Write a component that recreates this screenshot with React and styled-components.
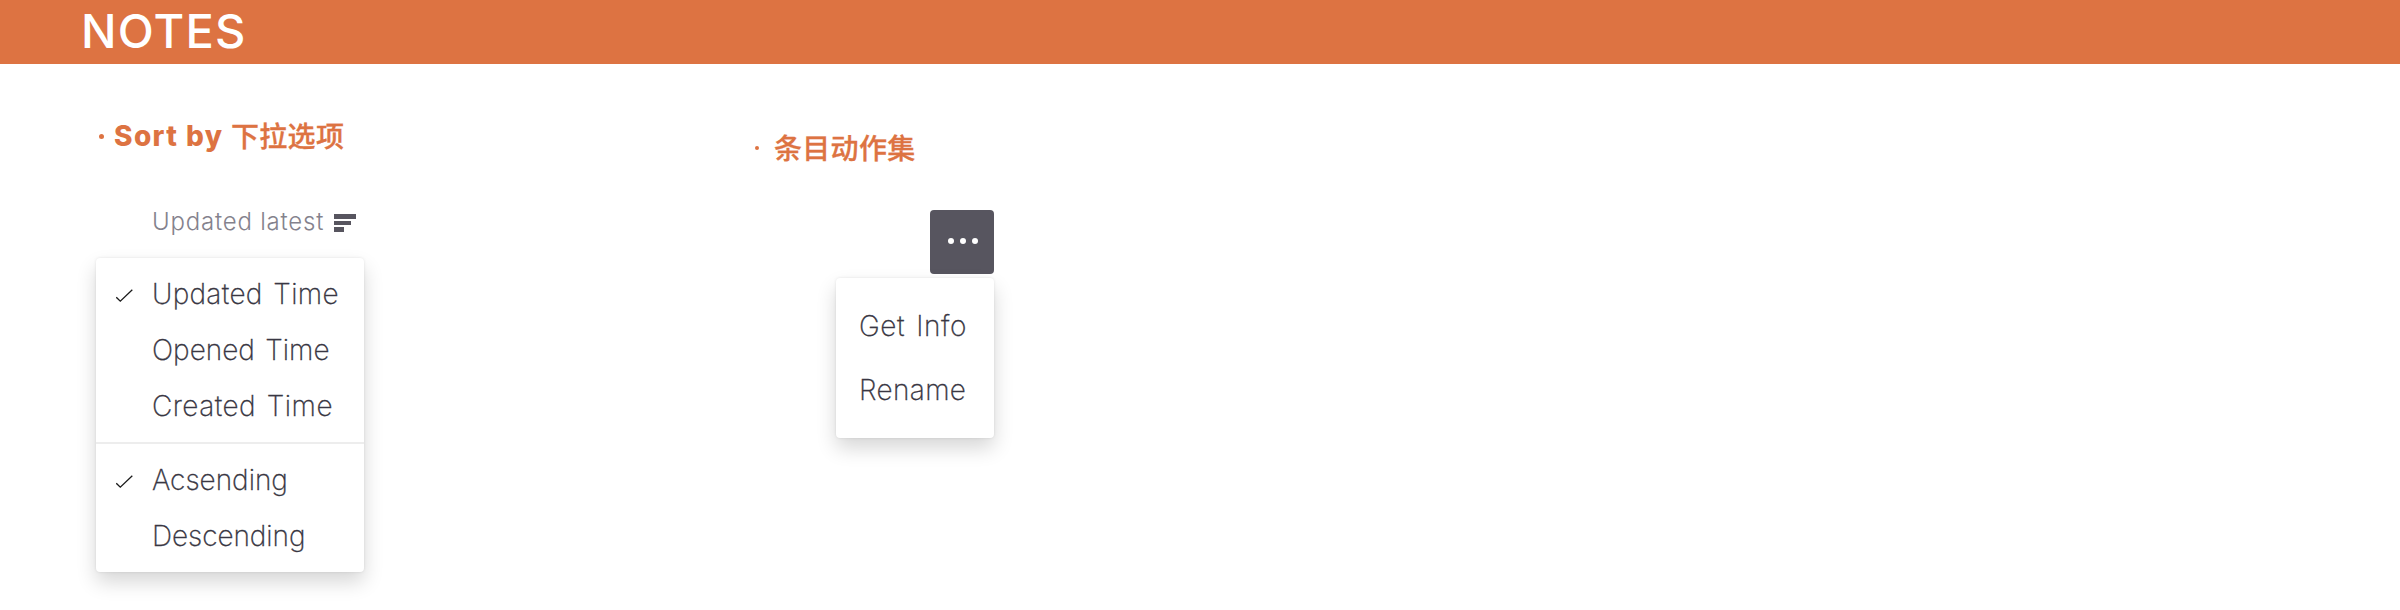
import React from "react";
import styled, { createGlobalStyle } from "styled-components";

const GlobalStyle = createGlobalStyle`
  *, *::before, *::after { box-sizing: border-box; }
  body {
    margin: 0;
    background: #fff;
    color: #393743;
    font-family: Inter, "Noto Sans CJK SC", sans-serif;
  }
`;

const Header = styled.header`
  height: 64px;
  padding-left: 81px;
  display: flex;
  align-items: center;
  background: #dd7342;
`;

const Title = styled.h1`
  margin: 0;
  padding-bottom: 2px;
  color: #fff;
  font-size: 47px;
  line-height: 62px;
  font-weight: 500;
  letter-spacing: 1.2px;
`;

const Content = styled.main`
  display: flex;
  align-items: flex-start;
  min-height: 546px;
`;

const SortSection = styled.section`
  width: 268px;
  margin-left: 96px;
  padding-top: 52px;
`;

const ActionSection = styled.section`
  width: 242px;
  margin-left: 388px;
  padding-top: 64px;
  display: flex;
  flex-direction: column;
`;

const Heading = styled.h2`
  margin: 0;
  height: 40px;
  display: flex;
  align-items: center;
  color: #dd7342;
  font-size: 28px;
  line-height: 40px;
  font-weight: 800;
  white-space: pre;
`;

const Bullet = styled.span`
  width: ${(p) => p.$size}px;
  height: ${(p) => p.$size}px;
  margin-left: ${(p) => p.$offset}px;
  margin-right: ${(p) => p.$gap}px;
  border-radius: 50%;
  background: #dd7342;
`;

const Latin = styled.span`
  width: 117px;
  letter-spacing: 1.4px;
`;

const Chinese = styled.span`
  padding-bottom: 2px;
  font-family: "Noto Sans CJK SC", sans-serif;
  font-weight: 500;
  letter-spacing: 0.3px;
  -webkit-text-stroke: 0.3px #dd7342;
`;

const SortTrigger = styled.div`
  height: 40px;
  margin-top: 46px;
  padding: 2px 0 0 56px;
  display: flex;
  align-items: center;
  color: #84828d;
  font-size: 24px;
  font-weight: 300;
  letter-spacing: 0.8px;
  white-space: nowrap;
`;

const SortLabel = styled.span`
  width: 182px;
  padding-bottom: 3px;
`;

const Menu = styled.div`
  width: ${(p) => p.$width}px;
  padding: ${(p) => p.$padding}px 0;
  border-radius: 4px;
  background: #fff;
  box-shadow: 0 10px 20px rgba(0, 0, 0, 0.16), 0 0 3px rgba(0, 0, 0, 0.1);
`;

const SortMenu = styled(Menu)`
  margin-top: 16px;
`;

const ActionMenu = styled(Menu)`
  margin-top: 4px;
  align-self: flex-end;
`;

const Item = styled.div`
  height: ${(p) => p.$height}px;
  padding-left: ${(p) => p.$inset}px;
  display: flex;
  align-items: center;
  font-size: 28px;
  font-weight: 200;
  letter-spacing: ${(p) => p.$tracking ?? 0.2}px;
  word-spacing: 2.5px;
  white-space: nowrap;
  -webkit-text-stroke: 0.3px #393743;
`;

const CheckSlot = styled.span`
  width: 36px;
  padding-top: 4px;
  display: flex;
`;

const Divider = styled.div`
  height: 2px;
  margin: 8px 0;
  background: #ededed;
`;

const MoreButton = styled.button`
  width: 64px;
  height: 64px;
  margin-top: 42px;
  padding: 0 0 2px 2px;
  align-self: flex-end;
  display: flex;
  align-items: center;
  justify-content: center;
  gap: 6px;
  border: 0;
  border-radius: 4px;
  background: #57555f;
`;

const Dot = styled.span`
  width: 6px;
  height: 6px;
  border-radius: 50%;
  background: #fff;
`;

const SortIcon = () => (
  <svg width="22" height="18" viewBox="0 0 22 18" fill="#57555f">
    <path d="M0 0h22v5H0zM0 7h17v4H0zM0 13h10v5H0z" />
  </svg>
);

const CheckIcon = () => (
  <svg width="18" height="14" viewBox="0 0 18 14" fill="none" stroke="#1a1a1a" strokeWidth="1.3">
    <path d="M0.3 8.3L4.3 12.2L16.3 0.8" />
  </svg>
);

const SortItem = ({ checked, children, tracking }) => (
  <Item $height={56} $inset={20} $tracking={tracking}>
    <CheckSlot>{checked && <CheckIcon />}</CheckSlot>
    {children}
  </Item>
);

export default function App() {
  return (
    <>
      <GlobalStyle />
      <Header>
        <Title>NOTES</Title>
      </Header>
      <Content>
        <SortSection>
          <Heading>
            <Bullet $size={5} $offset={3} $gap={10} />
            <Latin>Sort by</Latin>
            <Chinese>下拉选项</Chinese>
          </Heading>
          <SortTrigger>
            <SortLabel>Updated latest</SortLabel>
            <SortIcon />
          </SortTrigger>
          <SortMenu $width={268} $padding={8}>
            <SortItem checked tracking={0.3}>Updated Time</SortItem>
            <SortItem tracking={0}>Opened Time</SortItem>
            <SortItem tracking={0.45}>Created Time</SortItem>
            <Divider />
            <SortItem checked tracking={0}>Acsending</SortItem>
            <SortItem tracking={-0.05}>Descending</SortItem>
          </SortMenu>
        </SortSection>
        <ActionSection>
          <Heading>
            <Bullet $size={4} $offset={3} $gap={15} />
            <Chinese>条目动作集</Chinese>
          </Heading>
          <MoreButton aria-label="More actions">
            <Dot />
            <Dot />
            <Dot />
          </MoreButton>
          <ActionMenu $width={158} $padding={16}>
            <Item $height={64} $inset={23} $tracking={0.6}>Get Info</Item>
            <Item $height={64} $inset={23} $tracking={0.35}>Rename</Item>
          </ActionMenu>
        </ActionSection>
      </Content>
    </>
  );
}
